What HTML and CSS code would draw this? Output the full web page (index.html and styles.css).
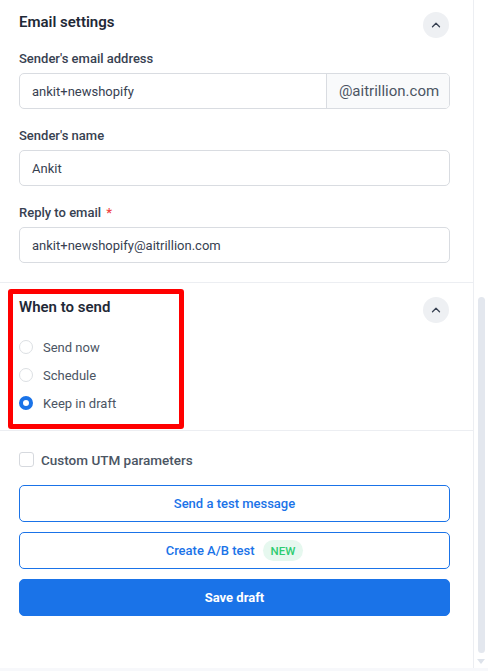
FILE: index.html
```html
<!DOCTYPE html>
<html>
<head>
<meta charset="utf-8">
<link rel="stylesheet" href="styles.css">
</head>
<body>
<div class="frame">
  <main class="panel">
    <section class="section section-email">
      <div class="section-head">
        <h2 class="section-title">Email settings</h2>
        <button class="chevron" aria-label="Collapse">
          <svg width="12" height="12" viewBox="0 0 12 12"><path d="M2.5 7.8 L6 4.3 L9.5 7.8" fill="none" stroke="#374151" stroke-width="1.3" stroke-linecap="round" stroke-linejoin="round"/></svg>
        </button>
      </div>
      <div class="field field-first">
        <label class="field-label">Sender's email address</label>
        <div class="input-group">
          <div class="input-text">ankit+newshopify</div>
          <div class="input-addon">@aitrillion.com</div>
        </div>
      </div>
      <div class="field">
        <label class="field-label">Sender's name</label>
        <div class="input">Ankit</div>
      </div>
      <div class="field">
        <label class="field-label">Reply to email <span class="req">*</span></label>
        <div class="input">ankit+newshopify@aitrillion.com</div>
      </div>
    </section>

    <section class="section section-when">
      <div class="section-head">
        <h2 class="section-title">When to send</h2>
        <button class="chevron" aria-label="Collapse">
          <svg width="12" height="12" viewBox="0 0 12 12"><path d="M2.5 7.8 L6 4.3 L9.5 7.8" fill="none" stroke="#374151" stroke-width="1.3" stroke-linecap="round" stroke-linejoin="round"/></svg>
        </button>
      </div>
      <div class="radios">
        <div class="radio-row"><span class="radio"></span><span class="radio-label">Send now</span></div>
        <div class="radio-row"><span class="radio"></span><span class="radio-label">Schedule</span></div>
        <div class="radio-row"><span class="radio radio-on"></span><span class="radio-label">Keep in draft</span></div>
      </div>
      <div class="highlight"></div>
    </section>

    <section class="section section-actions">
      <div class="check-row"><span class="checkbox"></span><span class="check-label">Custom UTM parameters</span></div>
      <div class="buttons">
        <button class="btn btn-outline">Send a test message</button>
        <button class="btn btn-outline">Create A/B test <span class="badge">NEW</span></button>
        <button class="btn btn-primary">Save draft</button>
      </div>
    </section>
  </main>
  <div class="scrollbar">
    <div class="thumb"></div>
    <div class="arrow"></div>
  </div>
</div>
</body>
</html>
```

FILE: styles.css
```css
* { box-sizing: border-box; }
html, body { margin: 0; padding: 0; }
body {
  background: #f7f8fb;
  font-family: Roboto, "Liberation Sans", Arial, sans-serif;
  color: #374151;
  height: 671px;
  overflow: hidden;
}
.frame {
  display: flex;
  height: 668px;
  background: #ffffff;
}
.panel {
  width: 474px;
  border-right: 1px solid #eceef2;
  display: flex;
  flex-direction: column;
}
.section {
  position: relative;
  padding: 0 23px 0 19px;
}
.section-email {
  padding-top: 12px;
  padding-bottom: 19px;
  border-bottom: 1px solid #eceef2;
}
.section-when {
  padding-top: 14px;
  padding-bottom: 17px;
  border-bottom: 1px solid #eceef2;
}
.section-actions {
  padding-top: 21px;
}
.section-head {
  display: flex;
  justify-content: space-between;
  align-items: flex-start;
}
.section-title {
  margin: 0;
  font-size: 15px;
  line-height: 20px;
  font-weight: 600;
  color: #1f2937;
}
.chevron {
  width: 26px;
  height: 26px;
  border-radius: 50%;
  border: none;
  background: #eef0f3;
  display: flex;
  align-items: center;
  justify-content: center;
  padding: 0;
  margin-right: 1px;
}
.field { margin-top: 18px; }
.field-first { margin-top: 12px; }
.field-label {
  display: block;
  font-size: 13px;
  line-height: 18px;
  font-weight: 500;
  color: #374151;
  margin-bottom: 5px;
}
.req { color: #ef4444; margin-left: 2px; }
.input, .input-group {
  height: 36px;
  border: 1px solid #d9dce1;
  border-radius: 5px;
  font-size: 13px;
  color: #374151;
}
.input {
  display: flex;
  align-items: center;
  padding-left: 12px;
}
.input-group { display: flex; overflow: hidden; }
.input-text {
  flex: 1;
  display: flex;
  align-items: center;
  padding-left: 12px;
}
.input-addon {
  width: 123px;
  display: flex;
  align-items: center;
  justify-content: center;
  background: #f9fafb;
  border-left: 1px solid #d9dce1;
  font-size: 15px;
  color: #4b5563;
  padding-left: 2px;
}
.radios {
  display: flex;
  flex-direction: column;
  gap: 8px;
  margin-top: 14px;
}
.radio-row {
  display: flex;
  align-items: center;
  height: 20px;
  gap: 10px;
}
.radio {
  width: 14px;
  height: 14px;
  border-radius: 50%;
  border: 1px solid #dcdfe3;
  background: #fff;
}
.radio-on {
  border: 4px solid #1a73e8;
}
.radio-label {
  font-size: 13px;
  color: #4b5563;
}
.highlight {
  position: absolute;
  left: 8px;
  top: 6px;
  width: 176px;
  height: 140px;
  border: 5px solid #ff0000;
  border-radius: 3px;
  pointer-events: none;
}
.check-row {
  display: flex;
  align-items: center;
  gap: 7px;
  height: 15px;
}
.checkbox {
  width: 15px;
  height: 15px;
  border: 1px solid #d6d9de;
  border-radius: 3px;
}
.check-label {
  font-size: 13.5px;
  font-weight: 500;
  color: #4b5563;
}
.buttons {
  display: flex;
  flex-direction: column;
  gap: 10px;
  margin-top: 18px;
}
.btn {
  height: 37px;
  border-radius: 5px;
  font-family: inherit;
  font-size: 13px;
  font-weight: 500;
  display: flex;
  align-items: center;
  justify-content: center;
  gap: 8px;
  cursor: pointer;
}
.btn-outline {
  background: #fff;
  border: 1px solid #1a73e8;
  color: #1a73e8;
}
.btn-primary {
  background: #1a73e8;
  border: 1px solid #1a73e8;
  color: #fff;
  font-weight: 700;
}
.badge {
  display: inline-flex;
  align-items: center;
  justify-content: center;
  height: 21px;
  padding: 0 8px;
  border-radius: 11px;
  background: #e6f8ef;
  color: #2ecc71;
  font-size: 11.5px;
  font-weight: 500;
}
.scrollbar {
  width: 14px;
  display: flex;
  flex-direction: column;
  align-items: center;
  padding-top: 297px;
}
.thumb {
  width: 7px;
  height: 356px;
  border-radius: 4px;
  background: #e3e7ee;
}
.arrow {
  margin-top: 6px;
  width: 0;
  height: 0;
  border-left: 4px solid transparent;
  border-right: 4px solid transparent;
  border-top: 5px solid #dde2ea;
}
```
